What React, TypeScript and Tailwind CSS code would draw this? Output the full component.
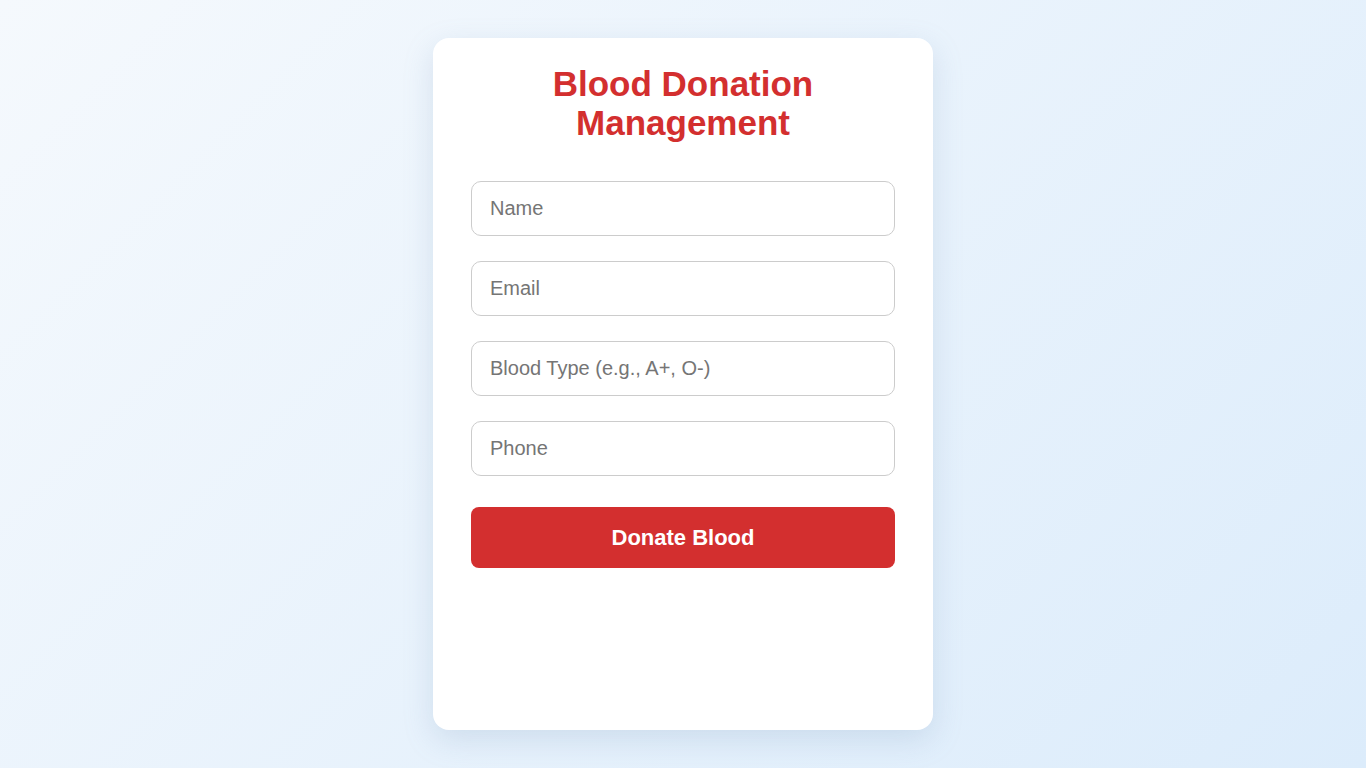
export default function App() {
  const fields = ['Name', 'Email', 'Blood Type (e.g., A+, O-)', 'Phone'];

  return (
    <div className="flex h-[768px] w-full items-center justify-center bg-[linear-gradient(135deg,#f5f9fd_0%,#dcecfb_100%)] font-['Liberation_Sans',Arial,sans-serif]">
      {/* Card */}
      <div className="flex h-[692px] w-[500px] flex-col rounded-2xl bg-white px-[38px] pt-[26px] shadow-[0_10px_30px_rgba(120,150,185,0.22)]">
        <h1 className="text-center text-[35px] font-bold leading-[39px] text-[#d32f2f]">
          Blood Donation
          <br />
          Management
        </h1>

        <form className="mt-[39px] flex flex-col gap-[25px]" onSubmit={(e) => e.preventDefault()}>
          {fields.map((f) => (
            <input
              key={f}
              type="text"
              placeholder={f}
              className="h-[55px] w-full rounded-[10px] border border-[#cccccc] bg-white px-[18px] text-[20px] text-[#333] outline-none placeholder:text-[#757575]"
            />
          ))}
          <button
            type="submit"
            className="mt-[6px] h-[61px] w-full rounded-lg bg-[#d32f2f] text-[22px] font-bold text-white"
          >
            Donate Blood
          </button>
        </form>
      </div>
    </div>
  );
}
